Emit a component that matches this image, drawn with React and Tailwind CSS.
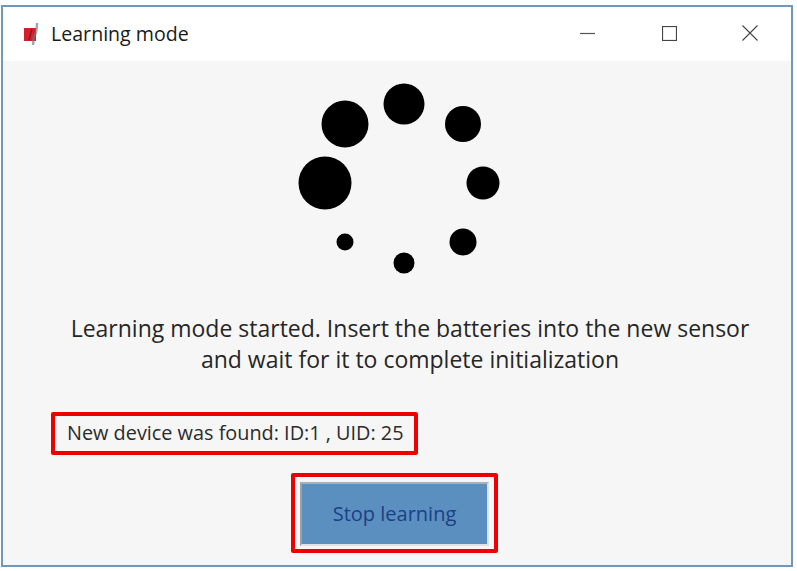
const dots = [
  { cx: 322, cy: 102, r: 26.5 },
  { cx: 342, cy: 43, r: 23.5 },
  { cx: 401, cy: 23, r: 20.5 },
  { cx: 460, cy: 43, r: 18 },
  { cx: 480, cy: 102, r: 16.5 },
  { cx: 460, cy: 161, r: 13.5 },
  { cx: 401, cy: 182, r: 10.5 },
  { cx: 342, cy: 161, r: 8.5 },
];

const App = () => {
  return (
    <div className="w-[797px] h-[571px] bg-white pt-[5px] pl-[1px] overflow-hidden" style={{ fontFamily: '"Open Sans", "Noto Sans", sans-serif' }}>
      <div className="w-[792px] h-[562px] border-2 border-[#6f98bb] flex flex-col">
        {/* title bar */}
        <div className="h-[54px] bg-white flex items-center shrink-0">
          <svg className="ml-[21px] w-[16px] h-[28px] mt-[-1px]" viewBox="0 0 16 28">
            <rect x="0" y="8" width="12" height="13" fill="#d3202c" />
            <path d="M8 9 L5 20" stroke="#8c1a24" strokeWidth="1.5" fill="none" />
            <path d="M13 3 Q13 14 10 16 L9 25" stroke="#77777a" strokeWidth="2.5" strokeOpacity="0.65" fill="none" />
          </svg>
          <span className="ml-[11px] text-[19.6px] leading-[28px] text-[#1a1a1a]">Learning mode</span>
          <svg className="ml-auto w-[15px] h-[15px] mt-[-2px]" viewBox="0 0 15 15">
            <path d="M0 7.5 H15" stroke="#555" strokeWidth="1.2" />
          </svg>
          <svg className="ml-[67px] w-[15px] h-[15px] mt-[-2px]" viewBox="0 0 15 15">
            <rect x="0.5" y="0.5" width="14" height="14" fill="none" stroke="#444" strokeWidth="1.2" />
          </svg>
          <svg className="ml-[65px] mr-[33px] w-[16px] h-[16px] mt-[-2px]" viewBox="0 0 16 16">
            <path d="M0.5 0.5 L15.5 15.5 M15.5 0.5 L0.5 15.5" stroke="#444" strokeWidth="1.1" />
          </svg>
        </div>

        {/* body */}
        <div className="flex-1 bg-[#f6f6f6] flex flex-col">
          <svg className="mt-[20px] w-[788px] h-[200px] shrink-0" viewBox="0 0 788 200">
            {dots.map((d, i) => (
              <circle key={i} cx={d.cx} cy={d.cy} r={d.r} fill="#000" />
            ))}
          </svg>
          <div className="mt-[32px] text-center text-[23px] leading-[31px] text-[#262626] whitespace-nowrap">
            <div className="ml-[26px]">Learning mode started. Insert the batteries into the new sensor</div>
            <div className="ml-[26px]">and wait for it to complete initialization</div>
          </div>
          <div className="mt-[37px] ml-[48px] w-[367px] h-[43px] border-4 border-[#ee0000] rounded-[2px] flex items-center pl-[12px] pb-[2px] text-[19.85px] text-[#2b2b2b] whitespace-nowrap">
            New device was found: ID:1 , UID: 25
          </div>
          <div className="mt-[18px] ml-[288px] w-[207px] h-[80px] border-4 border-[#ee0000] rounded-[2px] p-[5px] pb-[3px]">
            <button className="w-full h-full bg-[#5b8fbf] border-2 border-[#dfe3e6] border-l-[#9aa3ab] border-t-[#a9b0b6] text-[#1c3f86] text-[20px] flex items-center justify-center pb-[1px]">
              Stop learning
            </button>
          </div>
        </div>
      </div>
    </div>
  );
};

export default App;
